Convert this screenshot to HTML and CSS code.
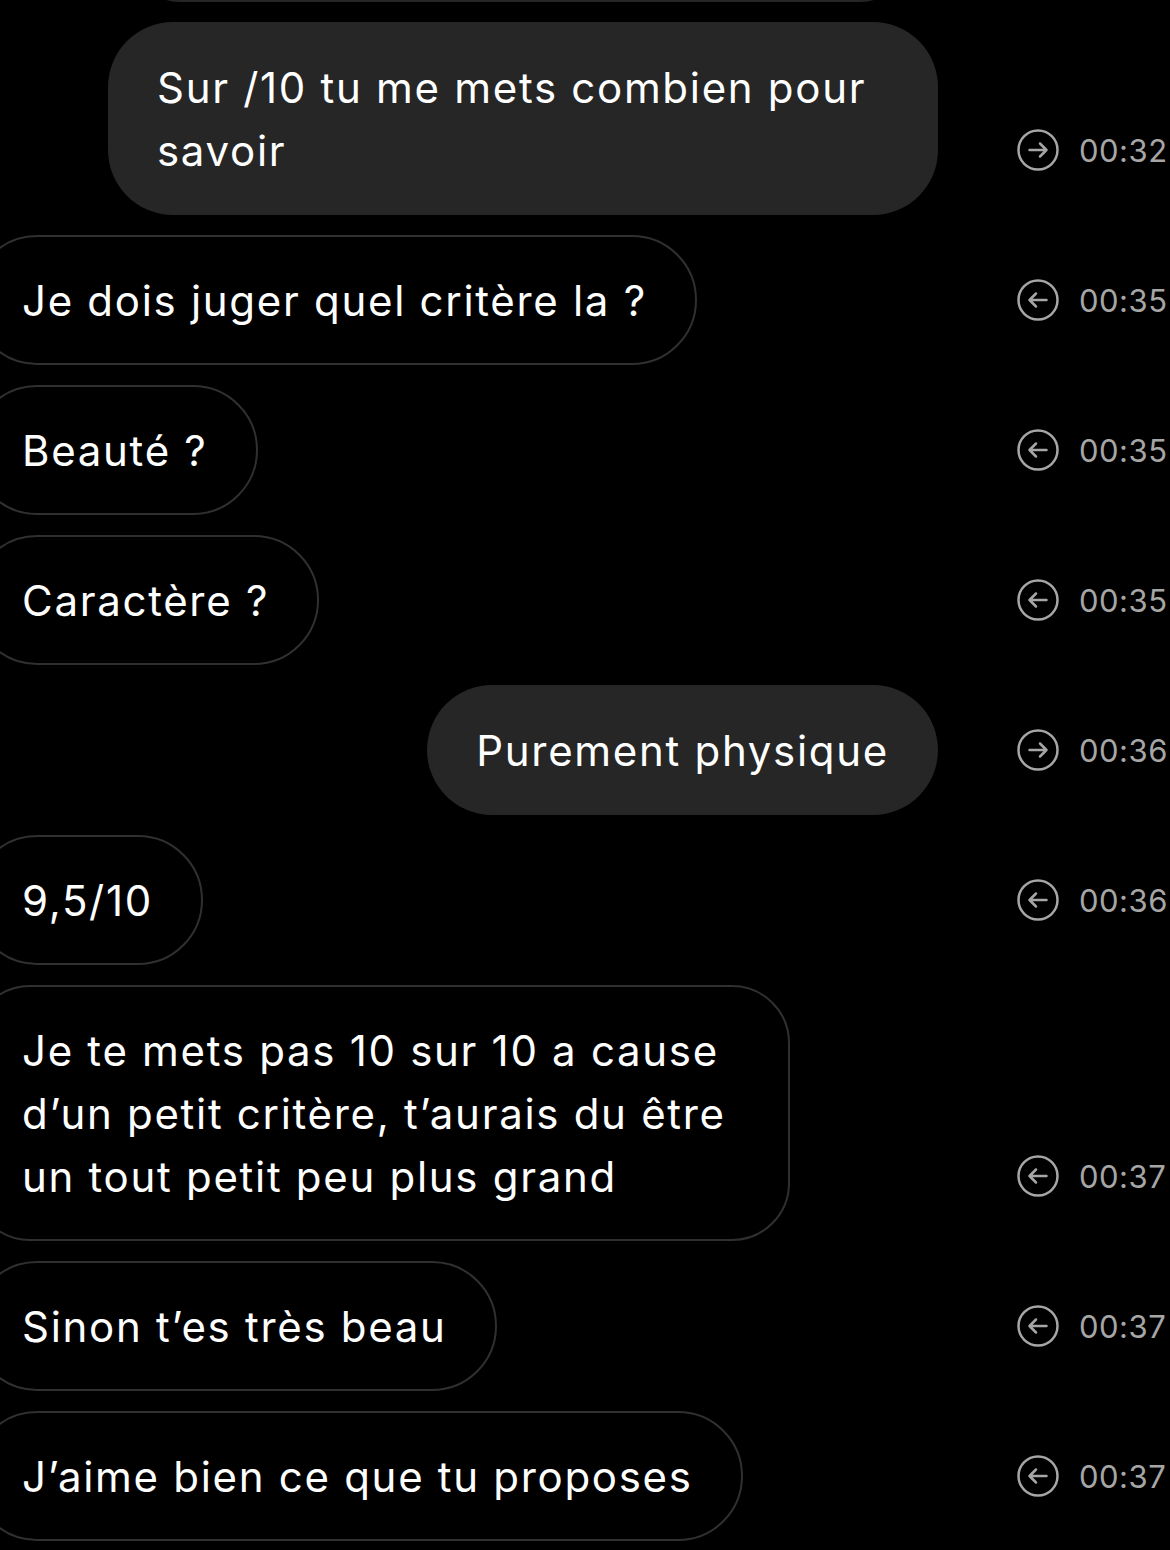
FILE: index.html
```html
<!DOCTYPE html>
<html lang="fr">
<head>
    <meta charset="UTF-8">
    <title>Messages</title>
    <link rel="stylesheet" href="styles.css">
</head>
<body>
    <div class="chat">
        <div class="partial"></div>

        <div class="row">
            <div class="col sent">
                <div class="bubble">Sur /10 tu me mets combien pour savoir</div>
            </div>
            <div class="meta">
                <svg class="dir" viewBox="0 0 42 42"><circle cx="21" cy="21" r="19.5"/><path d="M12.5 21h17M23 14.5l6.5 6.5-6.5 6.5"/></svg>
                <span class="time">00:32</span>
            </div>
        </div>

        <div class="row">
            <div class="col recv">
                <div class="bubble">Je dois juger quel critère la ?</div>
            </div>
            <div class="meta">
                <svg class="dir" viewBox="0 0 42 42"><circle cx="21" cy="21" r="19.5"/><path d="M29.5 21h-17M19 14.5L12.5 21l6.5 6.5"/></svg>
                <span class="time">00:35</span>
            </div>
        </div>

        <div class="row">
            <div class="col recv">
                <div class="bubble">Beauté ?</div>
            </div>
            <div class="meta">
                <svg class="dir" viewBox="0 0 42 42"><circle cx="21" cy="21" r="19.5"/><path d="M29.5 21h-17M19 14.5L12.5 21l6.5 6.5"/></svg>
                <span class="time">00:35</span>
            </div>
        </div>

        <div class="row">
            <div class="col recv">
                <div class="bubble">Caractère ?</div>
            </div>
            <div class="meta">
                <svg class="dir" viewBox="0 0 42 42"><circle cx="21" cy="21" r="19.5"/><path d="M29.5 21h-17M19 14.5L12.5 21l6.5 6.5"/></svg>
                <span class="time">00:35</span>
            </div>
        </div>

        <div class="row">
            <div class="col sent">
                <div class="bubble">Purement physique</div>
            </div>
            <div class="meta">
                <svg class="dir" viewBox="0 0 42 42"><circle cx="21" cy="21" r="19.5"/><path d="M12.5 21h17M23 14.5l6.5 6.5-6.5 6.5"/></svg>
                <span class="time">00:36</span>
            </div>
        </div>

        <div class="row">
            <div class="col recv">
                <div class="bubble">9,5/10</div>
            </div>
            <div class="meta">
                <svg class="dir" viewBox="0 0 42 42"><circle cx="21" cy="21" r="19.5"/><path d="M29.5 21h-17M19 14.5L12.5 21l6.5 6.5"/></svg>
                <span class="time">00:36</span>
            </div>
        </div>

        <div class="row">
            <div class="col recv">
                <div class="bubble long">Je te mets pas 10 sur 10 a cause<br>d’un petit critère, t’aurais du être<br>un tout petit peu plus grand</div>
            </div>
            <div class="meta">
                <svg class="dir" viewBox="0 0 42 42"><circle cx="21" cy="21" r="19.5"/><path d="M29.5 21h-17M19 14.5L12.5 21l6.5 6.5"/></svg>
                <span class="time">00:37</span>
            </div>
        </div>

        <div class="row">
            <div class="col recv">
                <div class="bubble">Sinon t’es très beau</div>
            </div>
            <div class="meta">
                <svg class="dir" viewBox="0 0 42 42"><circle cx="21" cy="21" r="19.5"/><path d="M29.5 21h-17M19 14.5L12.5 21l6.5 6.5"/></svg>
                <span class="time">00:37</span>
            </div>
        </div>

        <div class="row">
            <div class="col recv">
                <div class="bubble">J’aime bien ce que tu proposes</div>
            </div>
            <div class="meta">
                <svg class="dir" viewBox="0 0 42 42"><circle cx="21" cy="21" r="19.5"/><path d="M29.5 21h-17M19 14.5L12.5 21l6.5 6.5"/></svg>
                <span class="time">00:37</span>
            </div>
        </div>
    </div>
</body>
</html>
```

FILE: styles.css
```css
body {
    margin: 0;
    background-color: #000;
    color: #fff;
    font-family: Inter, Roboto, "Liberation Sans", sans-serif;
    overflow: hidden;
}

.chat {
    display: flex;
    flex-direction: column;
    gap: 20px;
}

/* bottom of the previous message, cut by the top of the screen */
.partial {
    width: 780px;
    height: 50px;
    margin: -48px 0 0 130px;
    background-color: #262626;
    border-radius: 0 0 50px 50px;
}

.row {
    display: flex;
    align-items: flex-end;
}

.col {
    width: 938px;
    flex-shrink: 0;
    display: flex;
}

.col.sent {
    justify-content: flex-end;
}

.bubble {
    font-size: 42px;
    line-height: 63px;
    letter-spacing: 1.7px;
    padding: 33.5px 49px;
    border-radius: 65px;
    white-space: nowrap;
}

.sent .bubble {
    background-color: #262626;
    max-width: 732px;
    white-space: normal;
}

.recv .bubble {
    margin-left: -28px;
    padding: 31.5px 48px;
    border: 2px solid #303030;
}

.recv .bubble.long {
    padding-right: 62px;
    border-radius: 58px;
}

/* Time + direction */
.meta {
    display: flex;
    align-items: center;
    gap: 20px;
    margin-left: 79px;
    margin-bottom: 44px;
    white-space: nowrap;
}

.dir {
    width: 42px;
    height: 42px;
    fill: none;
    stroke: #a6a6a6;
    stroke-width: 2.5;
    stroke-linecap: round;
    stroke-linejoin: round;
}

.time {
    font-size: 31px;
    letter-spacing: 0.5px;
    color: #a6a6a6;
}
```
